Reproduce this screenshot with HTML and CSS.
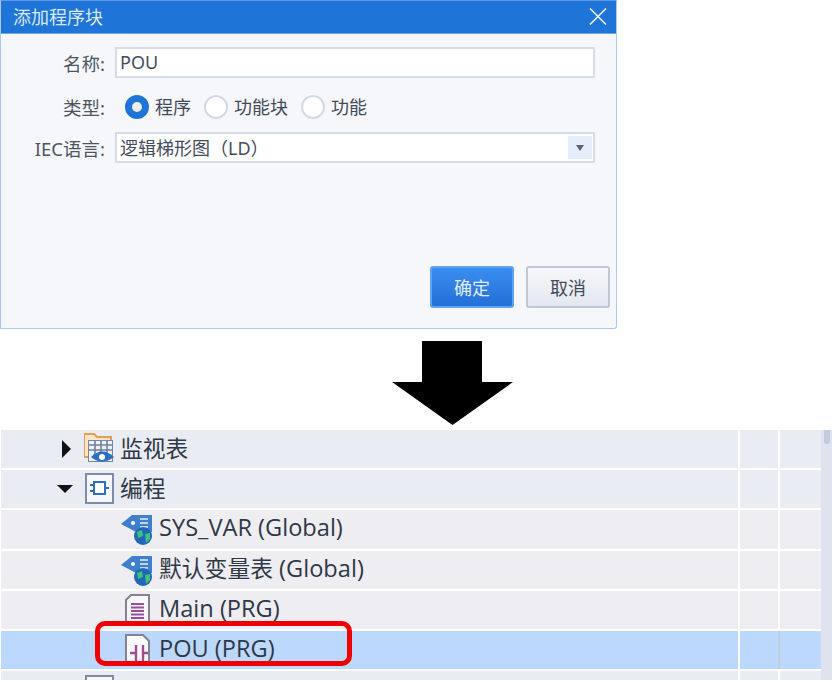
FILE: index.html
```html
<!DOCTYPE html>
<html lang="zh-CN">
<head>
<meta charset="utf-8">
<title>添加程序块</title>
<link rel="stylesheet" href="styles.css">
</head>
<body>
<section class="dialog">
  <header class="titlebar">
    <span class="title">添加程序块</span>
    <svg class="close" width="18" height="17" viewBox="0 0 18 17"><path d="M1 .5 17 16.500M17 .5 1 16.500" stroke="#e6effb" stroke-width="1.600" fill="none"/></svg>
  </header>
  <div class="form">
    <div class="field field-name">
      <label class="label">名称:</label>
      <div class="input">POU</div>
    </div>
    <div class="field field-radio">
      <label class="label">类型:</label>
      <div class="radios">
        <span class="radio checked"></span><span class="radio-text">程序</span>
        <span class="radio"></span><span class="radio-text">功能块</span>
        <span class="radio"></span><span class="radio-text">功能</span>
      </div>
    </div>
    <div class="field">
      <label class="label">IEC语言:</label>
      <div class="input select">
        <span>逻辑梯形图（LD）</span>
        <span class="drop"><svg width="8" height="6" viewBox="0 0 8 6"><path d="M0 0H8L4 6Z" fill="#5c6480"/></svg></span>
      </div>
    </div>
  </div>
  <div class="actions">
    <button class="btn primary">确定</button>
    <button class="btn">取消</button>
  </div>
</section>

<svg class="arrow" width="121" height="84" viewBox="0 0 121 84"><path d="M30 0H90V41H121L60.500 84 0 41H30Z" fill="#000"/></svg>

<section class="panel">
  <div class="tree">
    <div class="row">
      <div class="cell name lvl1">
        <svg class="caret" width="16" height="18" viewBox="0 0 16 18"><path d="M5 0 14 9 5 18Z" fill="#111"/></svg>
        <svg class="ico" width="32" height="32" viewBox="0 0 32 32">
          <path d="M0 1H10L13 4H27V24H0Z" fill="#f9e6c8" stroke="#e2a052" stroke-width="2"/>
          <rect x="4.500" y="7.500" width="24" height="21" fill="#eef0f6" stroke="#7486a8"/>
          <path d="M5 12H28M5 17H28M11 8V24M17 8V24M23 8V24" stroke="#6f7f9f" stroke-width="1.600"/>
          <path d="M7 24Q18 13 30 24Q18 33 7 24Z" fill="#2a6fc4"/>
          <circle cx="18" cy="24" r="3" fill="#fff"/>
        </svg>
        <span class="cjk">监视表</span>
      </div>
      <div class="cell"></div><div class="cell"></div>
    </div>
    <div class="row">
      <div class="cell name lvl1">
        <svg class="caret" width="16" height="16" viewBox="0 0 16 16"><path d="M0 4H16L8 12Z" fill="#111"/></svg>
        <svg class="ico" width="32" height="32" viewBox="0 0 32 32">
          <rect x="2" y="1" width="27" height="29" fill="#f5f7fb" stroke="#7f8aa6" stroke-width="2"/>
          <rect x="10" y="9" width="11" height="12" fill="#fff" stroke="#2f6fc0" stroke-width="2"/>
          <path d="M6 12H10M6 18H10M21 15H25" stroke="#2f6fc0" stroke-width="2"/>
        </svg>
        <span class="cjk">编程</span>
      </div>
      <div class="cell"></div><div class="cell"></div>
    </div>
    <div class="row file">
      <div class="cell name lvl2">
        <svg class="ico" width="32" height="32" viewBox="0 0 32 32">
          <path d="M0 11 11 2H31V19H15Z" fill="#3f7fd0"/>
          <circle cx="12" cy="10" r="2" fill="#fff"/>
          <path d="M19 6H27M19 10H27M19 14H27" stroke="#e8f0fb" stroke-width="1.600"/>
          <circle cx="22" cy="23" r="9" fill="#2266b8"/>
          <path d="M16 19 21 17 22 23 17 25ZM24 21 29 20 29 26 25 30Z" fill="#3fc27a"/>
        </svg>
        <span class="txt">SYS_VAR (Global)</span>
      </div>
      <div class="cell"></div><div class="cell"></div>
    </div>
    <div class="row file">
      <div class="cell name lvl2">
        <svg class="ico" width="32" height="32" viewBox="0 0 32 32">
          <path d="M0 11 11 2H31V19H15Z" fill="#3f7fd0"/>
          <circle cx="12" cy="10" r="2" fill="#fff"/>
          <path d="M19 6H27M19 10H27M19 14H27" stroke="#e8f0fb" stroke-width="1.600"/>
          <circle cx="22" cy="23" r="9" fill="#2266b8"/>
          <path d="M16 19 21 17 22 23 17 25ZM24 21 29 20 29 26 25 30Z" fill="#3fc27a"/>
        </svg>
        <span class="txt"><span class="cjk-inline">默认变量表</span> (Global)</span>
      </div>
      <div class="cell"></div><div class="cell"></div>
    </div>
    <div class="row file">
      <div class="cell name lvl2">
        <svg class="ico" width="32" height="32" viewBox="0 0 32 32">
          <path d="M10 1H28V30H5V6Z" fill="#f7f7fa" stroke="#7f8392" stroke-width="2"/>
          <path d="M10 10H23M10 13.500H23M10 17H23M10 20.500H23M10 24H23" stroke="#9a4f9c" stroke-width="1.800"/>
        </svg>
        <span class="txt">Main (PRG)</span>
      </div>
      <div class="cell"></div><div class="cell"></div>
    </div>
    <div class="row selected">
      <div class="cell name lvl2">
        <svg class="ico" width="32" height="32" viewBox="0 0 32 32">
          <path d="M5 1H22L28 7V30H5Z" fill="#fbfbfd" stroke="#7f8392" stroke-width="2"/>
          <path d="M9 19H15M15 11V27M22 11V27M22 19H27" stroke="#a04a9a" stroke-width="2.400" fill="none"/>
        </svg>
        <span class="txt">POU (PRG)</span>
      </div>
      <div class="cell"></div><div class="cell divider"></div>
    </div>
    <div class="row">
      <div class="cell name lvl1 clipped">
        <span class="caret-space"></span>
        <svg class="ico" width="32" height="32" viewBox="0 0 32 32"><rect x="2" y="1" width="27" height="29" fill="#f5f7fb" stroke="#7f8aa6" stroke-width="2"/></svg>
        <span class="cjk">任务</span>
      </div>
      <div class="cell"></div><div class="cell"></div>
    </div>
  </div>
  <div class="scrollbar"><div class="thumb"></div></div>
  <div class="highlight"></div>
</section>
</body>
</html>
```

FILE: styles.css
```css
* { box-sizing: border-box; }
html, body { margin: 0; padding: 0; background: #fff; }
body {
  width: 832px;
  height: 682px;
  overflow: hidden;
  font-family: "Open Sans", "Noto Sans CJK SC", sans-serif;
  color: #3b4454;
}
.dialog {
  width: 617px;
  height: 329px;
  background: #f5f7fb;
  border: 1px solid #a9cbf2;
  border-top: 1px solid #5d9be6;
  border-bottom-right-radius: 3px;
  display: flex;
  flex-direction: column;
}
.titlebar {
  height: 33px;
  background: #1f74d8;
  border-bottom: 1px solid #6ba5ea;
  display: flex;
  align-items: center;
  justify-content: space-between;
  padding: 0 9px 2px 12px;
  flex: none;
}
.title {
  font-family: "Noto Sans CJK SC", sans-serif;
  font-size: 18px;
  color: #dbe8f9;
}
.form {
  padding-top: 13px;
  flex: 1;
  display: flex;
  flex-direction: column;
}
.field {
  display: flex;
  align-items: center;
  height: 31px;
  flex: none;
}
.field-name { margin-bottom: 16px; }
.field-radio { height: 25px; margin-bottom: 13px; }
.label {
  width: 104px;
  text-align: right;
  font-size: 18.500px;
  font-family: "Noto Sans", "Noto Sans CJK SC", sans-serif;
  color: #4d5563;
  margin-right: 10px;
  white-space: nowrap;
}
.input {
  width: 480px;
  height: 31px;
  background: #fff;
  border: 2px solid #d5dbe8;
  font-size: 18px;
  line-height: 27px;
  padding-left: 3px;
  color: #434c5c;
  font-family: "Noto Sans", "Noto Sans CJK SC", sans-serif;
}
.select {
  display: flex;
  justify-content: space-between;
  align-items: center;
  line-height: 1;
  padding-right: 1px;
}
.drop {
  width: 24px;
  height: 23px;
  background: #e6eefb;
  display: flex;
  align-items: center;
  justify-content: center;
}
.radios {
  display: flex;
  align-items: center;
  padding-left: 10px;
}
.radio {
  width: 24px;
  height: 24px;
  border-radius: 50%;
  border: 2px solid #d3d9e6;
  background: #fff;
  flex: none;
}
.radio.checked {
  background: #eceef3;
  border: 7px solid #1f74d8;
}
.radio-text {
  font-family: "Noto Sans CJK SC", sans-serif;
  font-size: 18px;
  margin: 0 13px 2px 6px;
  color: #424a58;
}
.actions {
  display: flex;
  justify-content: flex-end;
  gap: 12px;
  padding-right: 6px;
  padding-bottom: 20px;
}
.btn {
  width: 84px;
  height: 42px;
  border-radius: 3px;
  border: 2px solid #bcc7d9;
  background: linear-gradient(#f6f7fa, #e3e7ef);
  font-family: "Noto Sans CJK SC", sans-serif;
  font-size: 18px;
  color: #444c5a;
  padding: 0;
}
.btn.primary {
  border-color: #5fa4f2;
  background: linear-gradient(#3b8cf0, #2270d8);
  color: #e2edfb;
}
.arrow {
  display: block;
  margin: 12px 0 5px 392px;
}
.panel {
  position: relative;
  width: 832px;
  height: 250px;
  display: flex;
  overflow: hidden;
}
.tree {
  width: 820px;
  margin-left: 1px;
  flex: none;
  display: grid;
  grid-auto-rows: 38.200px;
  row-gap: 2px;
  overflow: hidden;
}
.row {
  display: grid;
  grid-template-columns: 737px 38px 1fr;
  column-gap: 2px;
}
.cell { background: #e9ecf3; min-width: 0; }
.file .cell { background: #eeeef2; }
.selected .cell { background: #bcd9fd; }
.selected .divider { box-shadow: -2px 0 0 #c4ccd8; }
.name {
  display: flex;
  align-items: center;
  font-size: 23.600px;
  color: #2f3846;
  white-space: nowrap;
}
.lvl1 { padding-left: 56px; }
.lvl2 { padding-left: 120px; }
.caret { flex: none; margin-right: 11px; }
.caret-space { width: 27px; flex: none; }
.ico { flex: none; margin-right: 6px; }
.lvl1 .ico { margin-right: 4px; }
.txt, .cjk { margin-bottom: 4px; }
.cjk, .cjk-inline { font-family: "Noto Sans CJK SC", sans-serif; }
.cjk { font-size: 22.800px; }
.cjk-inline { font-size: 22.800px; }
.clipped { align-items: flex-start; padding-top: 4px; }
.scrollbar {
  width: 11px;
  background: #dfe3ee;
  flex: none;
}
.thumb {
  width: 6px;
  height: 14px;
  margin-left: 3px;
  background: #c3cbe0;
  border-radius: 0 0 3px 3px;
}
.highlight {
  position: absolute;
  left: 95px;
  top: 191px;
  width: 257px;
  height: 45px;
  border: 5px solid #ee0000;
  border-radius: 10px;
}
```
